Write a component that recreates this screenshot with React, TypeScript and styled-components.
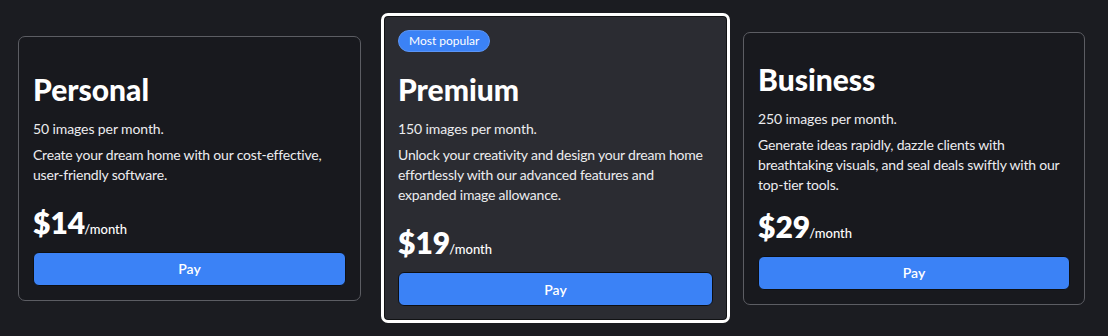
import React from "react";
import styled, { createGlobalStyle } from "styled-components";

const Global = createGlobalStyle`
  html, body { margin: 0; padding: 0; background: #1b1c21; }
  body { font-family: Lato, "Noto Sans", "Liberation Sans", sans-serif; -webkit-font-smoothing: antialiased; }
  * { box-sizing: border-box; }
`;

const Page = styled.div`
  width: 1108px;
  height: 336px;
  display: flex;
  align-items: center;
  padding: 0 22px 0 18px;
  background: #1b1c21;
`;

const Card = styled.div<{ $featured?: boolean; $w: number; $padTop: number; $mx?: string }>`
  width: ${(p) => p.$w}px;
  flex: none;
  display: flex;
  flex-direction: column;
  margin: ${(p) => p.$mx ?? "0"};
  padding: ${(p) => p.$padTop}px 14px 14px 14px;
  border-radius: 7px;
  background: ${(p) => (p.$featured ? "#2b2c32" : "#18191e")};
  border: ${(p) => (p.$featured ? "3px solid #ffffff" : "1px solid #5c5d63")};
  box-shadow: ${(p) => (p.$featured ? "inset 0 0 0 1px #111214" : "none")};
`;

const Badge = styled.span`
  align-self: flex-start;
  height: 22px;
  display: inline-flex;
  align-items: center;
  padding: 0 10px;
  margin-bottom: 19px;
  border-radius: 999px;
  background: #3b82f6;
  border: 1px solid #5b95f5;
  color: #ffffff;
  font-size: 12px;
  line-height: 1;
`;

const Title = styled.h2`
  margin: 0;
  font-size: 30px;
  line-height: 36px;
  font-weight: 900;
  color: #ffffff;
`;

const Quota = styled.p`
  margin: 12px 0 0 0;
  font-size: 14px;
  line-height: 20px;
  letter-spacing: -0.1px;
  color: #ececef;
`;

const Desc = styled.p<{ $gap: number }>`
  margin: 6px 0 ${(p) => p.$gap}px 0;
  font-size: 14px;
  line-height: 20px;
  letter-spacing: -0.2px;
  color: #ececef;
`;

const Price = styled.div`
  display: flex;
  align-items: baseline;
  height: 36px;
  color: #ffffff;
`;

const Amount = styled.span`
  font-size: 30px;
  line-height: 36px;
  font-weight: 800;
`;

const Period = styled.span`
  font-size: 13px;
  font-weight: 500;
  margin-left: -1px;
`;

const PayButton = styled.button`
  margin-top: 12px;
  height: 34px;
  width: 100%;
  border: 1px solid #0e0f12;
  border-radius: 6px;
  background: #3b82f6;
  color: #ffffff;
  font-family: inherit;
  font-size: 14px;
  font-weight: 600;
  cursor: pointer;
`;

type Plan = {
  name: string;
  quota: string;
  desc: string;
  price: string;
  featured?: boolean;
  w: number;
  padTop: number;
  gap: number;
  mx?: string;
};

const plans: Plan[] = [
  {
    name: "Personal",
    quota: "50 images per month.",
    desc: "Create your dream home with our cost-effective, user-friendly software.",
    price: "$14",
    w: 343,
    padTop: 34,
    gap: 19,
  },
  {
    name: "Premium",
    quota: "150 images per month.",
    desc: "Unlock your creativity and design your dream home effortlessly with our advanced features and expanded image allowance.",
    price: "$19",
    featured: true,
    w: 349,
    padTop: 14,
    gap: 19,
    mx: "0 13px 0 20px",
  },
  {
    name: "Business",
    quota: "250 images per month.",
    desc: "Generate ideas rapidly, dazzle clients with breathtaking visuals, and seal deals swiftly with our top-tier tools.",
    price: "$29",
    w: 342,
    padTop: 28,
    gap: 13,
  },
];

export default function App() {
  return (
    <>
      <Global />
      <Page>
        {plans.map((p) => (
          <Card key={p.name} $featured={p.featured} $w={p.w} $padTop={p.padTop} $mx={p.mx}>
            {p.featured && <Badge>Most popular</Badge>}
            <Title>{p.name}</Title>
            <Quota>{p.quota}</Quota>
            <Desc $gap={p.gap}>{p.desc}</Desc>
            <Price>
              <Amount>{p.price}</Amount>
              <Period>/month</Period>
            </Price>
            <PayButton>Pay</PayButton>
          </Card>
        ))}
      </Page>
    </>
  );
}
